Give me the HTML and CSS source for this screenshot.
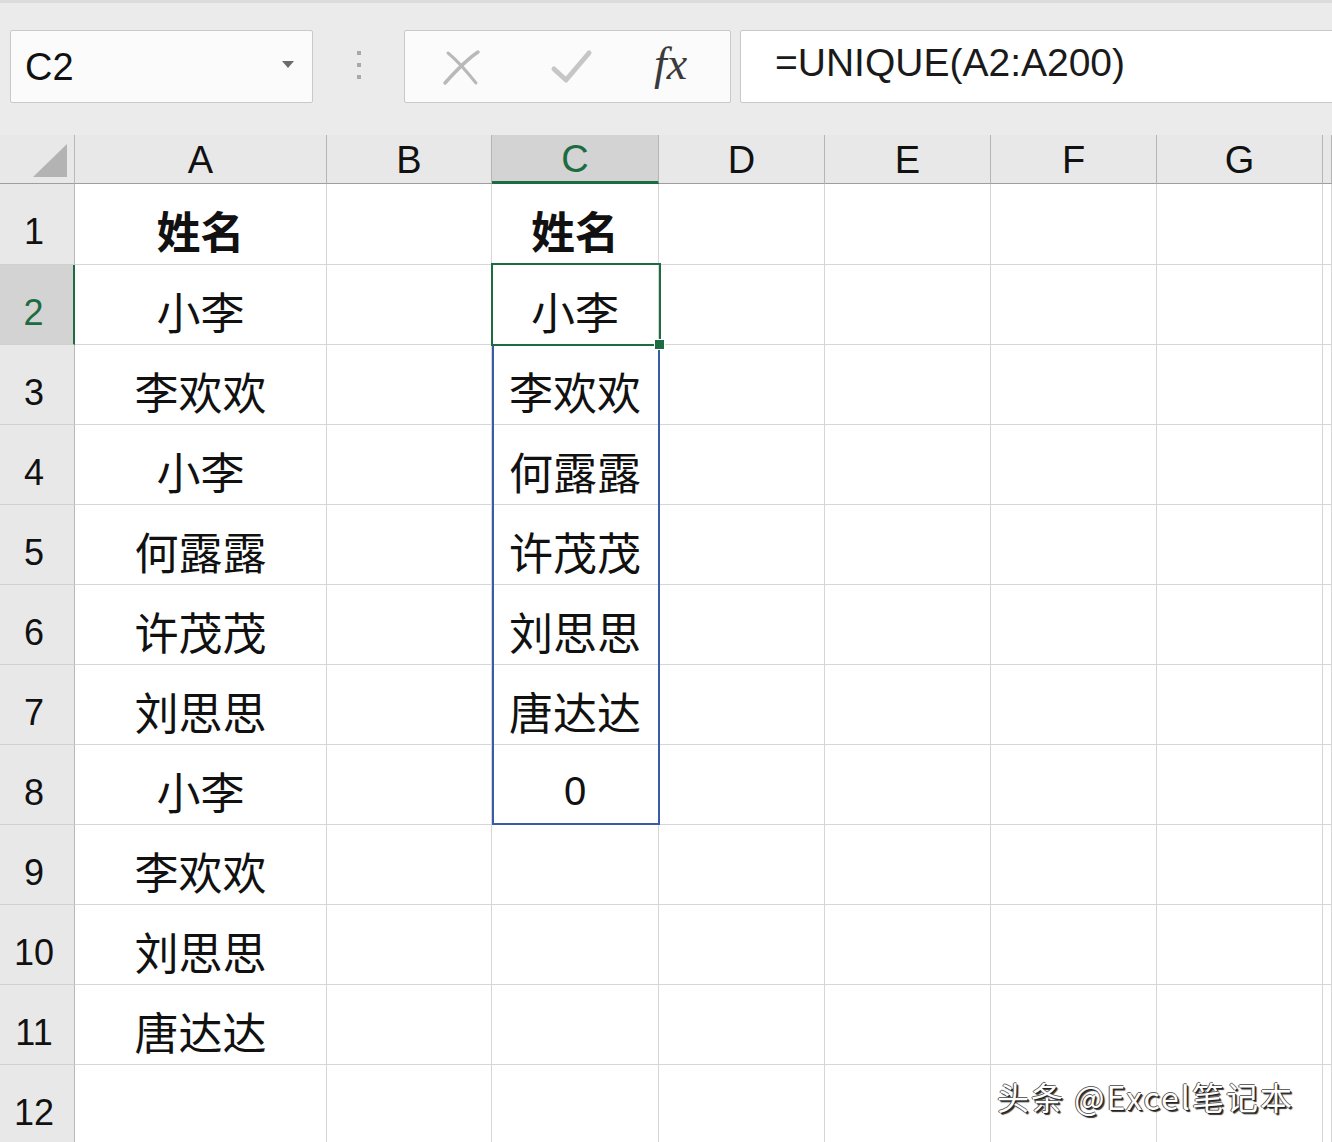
FILE: index.html
```html
<!DOCTYPE html>
<html lang="zh-CN">
<head>
<meta charset="utf-8">
<title>UNIQUE</title>
<link rel="stylesheet" href="styles.css">
</head>
<body>
<div class="app">
  <div class="toolbar">
    <div class="namebox">
      <span class="name">C2</span>
      <span class="caret"></span>
    </div>
    <div class="grip"><i></i><i></i><i></i></div>
    <div class="funcbox">
      <svg class="ico" width="44" height="44" viewBox="0 0 44 44"><path d="M5 38 C14 28 26 15 38 7" stroke="#b9b9b9" stroke-width="3.5" fill="none" stroke-linecap="round"/><path d="M8 8 C18 16 28 28 36 38" stroke="#b9b9b9" stroke-width="3" fill="none" stroke-linecap="round"/></svg>
      <svg class="ico" width="44" height="44" viewBox="0 0 44 44"><path d="M5 24 L17 35 L40 8" stroke="#c6c6c6" stroke-width="5" fill="none" stroke-linecap="round" stroke-linejoin="round"/></svg>
      <span class="fx">fx</span>
    </div>
    <div class="formula">=UNIQUE(A2:A200)</div>
  </div>

  <div class="sheet">
    <div class="corner"><span class="tri"></span></div>
    <div class="ch">A</div>
    <div class="ch">B</div>
    <div class="ch sel">C</div>
    <div class="ch">D</div>
    <div class="ch">E</div>
    <div class="ch">F</div>
    <div class="ch">G</div>
    <div class="ch"></div>

    <div class="rh">1</div><div class="c b">姓名</div><div class="c"></div><div class="c b">姓名</div><div class="c"></div><div class="c"></div><div class="c"></div><div class="c"></div><div class="c"></div>
    <div class="rh sel">2</div><div class="c">小李</div><div class="c"></div><div class="c">小李</div><div class="c"></div><div class="c"></div><div class="c"></div><div class="c"></div><div class="c"></div>
    <div class="rh">3</div><div class="c">李欢欢</div><div class="c"></div><div class="c">李欢欢</div><div class="c"></div><div class="c"></div><div class="c"></div><div class="c"></div><div class="c"></div>
    <div class="rh">4</div><div class="c">小李</div><div class="c"></div><div class="c">何露露</div><div class="c"></div><div class="c"></div><div class="c"></div><div class="c"></div><div class="c"></div>
    <div class="rh">5</div><div class="c">何露露</div><div class="c"></div><div class="c">许茂茂</div><div class="c"></div><div class="c"></div><div class="c"></div><div class="c"></div><div class="c"></div>
    <div class="rh">6</div><div class="c">许茂茂</div><div class="c"></div><div class="c">刘思思</div><div class="c"></div><div class="c"></div><div class="c"></div><div class="c"></div><div class="c"></div>
    <div class="rh">7</div><div class="c">刘思思</div><div class="c"></div><div class="c">唐达达</div><div class="c"></div><div class="c"></div><div class="c"></div><div class="c"></div><div class="c"></div>
    <div class="rh">8</div><div class="c">小李</div><div class="c"></div><div class="c num">0</div><div class="c"></div><div class="c"></div><div class="c"></div><div class="c"></div><div class="c"></div>
    <div class="rh">9</div><div class="c">李欢欢</div><div class="c"></div><div class="c"></div><div class="c"></div><div class="c"></div><div class="c"></div><div class="c"></div><div class="c"></div>
    <div class="rh">10</div><div class="c">刘思思</div><div class="c"></div><div class="c"></div><div class="c"></div><div class="c"></div><div class="c"></div><div class="c"></div><div class="c"></div>
    <div class="rh">11</div><div class="c">唐达达</div><div class="c"></div><div class="c"></div><div class="c"></div><div class="c"></div><div class="c"></div><div class="c"></div><div class="c"></div>
    <div class="rh">12</div><div class="c"></div><div class="c"></div><div class="c"></div><div class="c"></div><div class="c"></div><div class="c"></div><div class="c"></div><div class="c"></div>

    <div class="spill"></div>
    <div class="active"><span class="handle"></span></div>
    <div class="watermark">头条 @Excel笔记本</div>
  </div>
</div>
</body>
</html>
```

FILE: styles.css
```css
html, body {
  margin: 0;
  padding: 0;
  background: #ffffff;
}
body {
  width: 1332px;
  height: 1142px;
  overflow: hidden;
  font-family: "Liberation Sans", "Noto Sans CJK SC", sans-serif;
  color: #111;
}
.app {
  width: 1332px;
  height: 1142px;
  overflow: hidden;
  display: flex;
  flex-direction: column;
}

/* ---------- toolbar ---------- */
.toolbar {
  height: 135px;
  box-sizing: border-box;
  flex: none;
  display: flex;
  align-items: flex-start;
  padding: 27px 0 0 10px;
  background: #ebebeb;
  border-top: 3px solid #dcdcdc;
  overflow: hidden;
}
.namebox {
  width: 303px;
  height: 73px;
  box-sizing: border-box;
  flex: none;
  background: #fbfbfb;
  border: 1px solid #c9c9c9;
  border-radius: 2px;
  display: flex;
  align-items: center;
  justify-content: space-between;
  padding: 0 18px 0 14px;
}
.name {
  font-size: 38px;
  color: #111;
  padding-top: 2px;
}
.caret {
  width: 0;
  height: 0;
  border-left: 6px solid transparent;
  border-right: 6px solid transparent;
  border-top: 7px solid #6b6b6b;
  margin-top: -4px;
}
.grip {
  width: 91px;
  height: 73px;
  flex: none;
  display: flex;
  flex-direction: column;
  align-items: center;
  justify-content: center;
  gap: 8px;
  padding-bottom: 4px;
  box-sizing: border-box;
}
.grip i {
  display: block;
  width: 4px;
  height: 4px;
  background: #a9a9a9;
}
.funcbox {
  width: 327px;
  height: 73px;
  box-sizing: border-box;
  flex: none;
  background: #fbfbfb;
  border: 1px solid #c9c9c9;
  border-radius: 2px;
  display: flex;
  align-items: center;
  padding: 0 0 0 35px;
  gap: 65px;
}
.ico {
  display: block;
  flex: none;
}
.fx {
  font-family: "Liberation Serif", "DejaVu Serif", serif;
  font-style: italic;
  font-size: 46px;
  color: #3a3a3a;
  letter-spacing: 0;
  margin-left: -4px;
  padding-bottom: 6px;
}
.formula {
  flex: none;
  width: 620px;
  height: 73px;
  box-sizing: border-box;
  margin-left: 9px;
  background: #ffffff;
  border: 1px solid #c9c9c9;
  border-radius: 2px;
  padding: 4px 0 0 34px;
  font-size: 39px;
  color: #1a1a1a;
  line-height: 56px;
}

/* ---------- sheet ---------- */
.sheet {
  position: relative;
  flex: 1;
  display: grid;
  grid-template-columns: 75px 252px 165px 167px 166px 166px 166px 166px 9px;
  grid-template-rows: 49px 81px repeat(11, 80px);
  background: #ffffff;
}
.corner {
  background: #e8e8e8;
  border-right: 1px solid #b9b9b9;
  border-bottom: 1px solid #9e9e9e;
  position: relative;
}
.tri {
  position: absolute;
  left: 33px;
  top: 9px;
  width: 0;
  height: 0;
  border-left: 34px solid transparent;
  border-bottom: 33px solid #b3b3b3;
}
.ch {
  background: #e8e8e8;
  border-right: 1px solid #b5b5b5;
  border-bottom: 1px solid #9e9e9e;
  display: flex;
  align-items: center;
  justify-content: center;
  font-size: 38px;
  color: #111;
  padding-top: 2px;
  box-sizing: border-box;
}
.ch.sel {
  background: #d3d3d3;
  color: #1d6b41;
  border-bottom: 3px solid #1d6b41;
}
.rh {
  background: #e8e8e8;
  border-right: 1px solid #b9b9b9;
  border-bottom: 1px solid #d0d0d0;
  display: flex;
  align-items: center;
  justify-content: center;
  font-size: 36px;
  color: #111;
  padding-top: 16px;
  padding-right: 6px;
  box-sizing: border-box;
}
.rh.sel {
  background: #d3d3d3;
  color: #1d6b41;
  border-right: 2px solid #1d6b41;
}
.c {
  border-right: 1px solid #d6d6d6;
  border-bottom: 1px solid #d6d6d6;
  display: flex;
  align-items: center;
  justify-content: center;
  font-family: "Noto Sans CJK SC", "Liberation Sans", sans-serif;
  font-size: 44px;
  color: #111;
  padding-top: 12px;
  box-sizing: border-box;
  white-space: nowrap;
  overflow: hidden;
}
.c.b {
  font-weight: 700;
}
.c.num {
  font-family: "Liberation Sans", sans-serif;
  font-size: 40px;
  padding-top: 14px;
}

/* ---------- selection overlays ---------- */
.spill {
  position: absolute;
  left: 492px;
  top: 209px;
  width: 168px;
  height: 481px;
  box-sizing: border-box;
  border: 2px solid #3a5ba6;
}
.active {
  position: absolute;
  left: 491px;
  top: 128px;
  width: 170px;
  height: 83px;
  box-sizing: border-box;
  border: 2px solid #1d6b41;
}
.handle {
  position: absolute;
  right: -6px;
  bottom: -6px;
  width: 9px;
  height: 9px;
  background: #1d6b41;
  border: 1px solid #ffffff;
}
.watermark {
  position: absolute;
  left: 997px;
  top: 938px;
  font-family: "Noto Sans CJK SC", "Liberation Sans", sans-serif;
  font-size: 32px;
  color: #ffffff;
  letter-spacing: 2px;
  text-shadow: 1px 1px 0 #222, -1px 0 0 #555, 0 -1px 0 #666, 2px 2px 1px #333;
  white-space: nowrap;
}
```
